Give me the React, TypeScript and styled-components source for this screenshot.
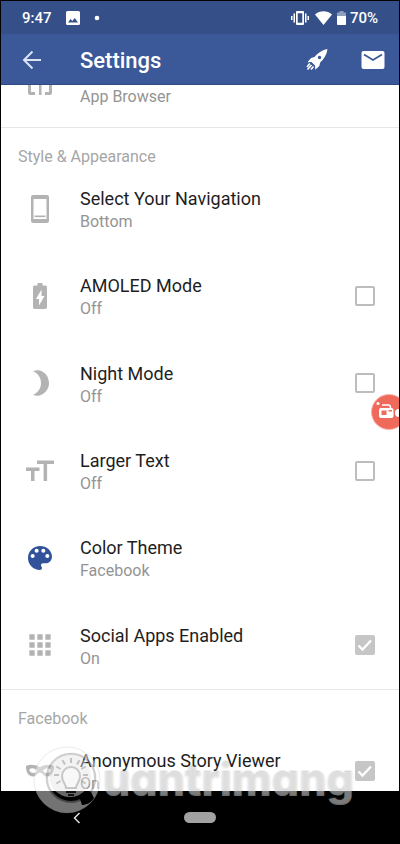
import React, { useState } from "react";
import styled, { createGlobalStyle } from "styled-components";

const GlobalStyle = createGlobalStyle`
  *, *::before, *::after { box-sizing: border-box; }
  body { margin: 0; background: #000; font-family: Roboto, "Noto Sans", sans-serif; }
  button { font: inherit; color: inherit; background: none; border: 0; padding: 0; cursor: pointer; }
  h1, h2, p { margin: 0; }
  svg { display: block; }
`;

const Phone = styled.div`
  position: relative;
  display: flex;
  flex-direction: column;
  min-height: 100vh;
  overflow: hidden;
  border: 1px solid #000;
  border-bottom: 0;
  background: #fff;
`;

const StatusBar = styled.div`
  display: flex;
  align-items: center;
  height: 33px;
  padding: 0 21px;
  background: #355088;
  color: #fff;
  font-size: 15px;
  font-weight: 500;
  line-height: 20px;
`;

const StatusGroup = styled.div<{ $end?: boolean }>`
  display: flex;
  align-items: center;
  gap: ${(p) => (p.$end ? "4px" : "14px")};
  margin-left: ${(p) => (p.$end ? "auto" : "0")};
`;

const Toolbar = styled.header`
  display: flex;
  align-items: center;
  height: 51px;
  padding: 2px 12px 0 17px;
  background: #3b5998;
  border-bottom: 1px solid #2f4a85;
  color: #fff;
`;

const ToolButton = styled.button`
  display: grid;
  place-items: center;
  width: 28px;
  height: 28px;
`;

const Title = styled.h1`
  flex: 1;
  margin: 2px 0 0 34px;
  font-size: 22px;
  font-weight: 500;
  line-height: 28px;
`;

const Actions = styled.div`
  display: flex;
  gap: 28px;
`;

const Content = styled.main`
  display: flex;
  flex: 1;
  flex-direction: column;
`;

const Section = styled.section<{ $grow?: boolean }>`
  display: flex;
  flex-direction: column;
  flex: ${(p) => (p.$grow ? "1 0 auto" : "0 0 auto")};
  border-top: 1px solid #e6e6e6;
`;

const SectionTitle = styled.h2`
  padding: 19px 17px 0;
  height: 37px;
  font-size: 16px;
  font-weight: 400;
  line-height: 20px;
  color: #a6a6a6;
`;

const Row = styled.div`
  display: flex;
  flex: 1 0 auto;
  align-items: center;
  min-height: 87px;
  padding: 0 24px 0 23px;
`;

const Peek = styled.div<{ $from: "top" | "bottom" }>`
  display: flex;
  flex-direction: column;
  justify-content: ${(p) => (p.$from === "top" ? "flex-start" : "flex-end")};
  height: ${(p) => (p.$from === "top" ? "64px" : "42px")};
  overflow: hidden;
`;

const RowIcon = styled.span<{ $color?: string }>`
  width: 32px;
  height: 32px;
  margin-right: 24px;
  color: ${(p) => p.$color ?? "#b3b3b3"};
`;

const RowText = styled.label<{ $secondLine?: boolean }>`
  flex: 1;
  padding-top: ${(p) => (p.$secondLine ? "26px" : "2px")};
`;

const RowTitle = styled.span`
  display: block;
  font-size: 18px;
  line-height: 24px;
  color: #1e1e1e;
`;

const RowValue = styled.span`
  display: block;
  font-size: 16px;
  line-height: 21px;
  color: #949494;
`;

const Check = styled.input`
  appearance: none;
  width: 20px;
  height: 20px;
  margin: 0;
  border: 2px solid #bdbdbd;
  border-radius: 2px;
  background: #fff;
  &:checked {
    background: #c6c6c6 url("data:image/svg+xml,%3Csvg xmlns='http://www.w3.org/2000/svg' viewBox='0 0 16 16'%3E%3Cpath d='M1.5 8.5l4 4L14 3.5' fill='none' stroke='white' stroke-width='2.4'/%3E%3C/svg%3E") center / 16px 16px no-repeat;
    border-color: #c6c6c6;
  }
`;

const NavBar = styled.nav`
  display: grid;
  grid-template-columns: 1fr auto 1fr;
  align-items: center;
  height: 53px;
  background: #000;
`;

const NavBack = styled.button`
  justify-self: center;
  width: 24px;
  height: 24px;
  margin-right: 32px;
  display: grid;
  place-items: center;
`;

const HomePill = styled.button`
  && {
    width: 32px;
    height: 11px;
    border-radius: 6px;
    background: #a2a2a2;
  }
`;

const Recorder = styled.button`
  position: absolute;
  top: 393px;
  right: -8px;
  width: 36px;
  height: 36px;
`;

const Watermark = styled.div`
  position: absolute;
  left: 32px;
  bottom: 28px;
  display: flex;
  align-items: center;
  pointer-events: none;
`;

const WatermarkText = styled.span`
  margin-left: -2px;
  font-family: Inter, sans-serif;
  font-size: 43px;
  font-weight: 800;
  line-height: 64px;
  font-feature-settings: "cv11";
  color: rgba(255, 255, 255, 0.42);
  text-shadow: 0 -1px 2px rgba(100, 100, 100, 0.35);
`;

const Art = ({ children, size = 32 }: { children: React.ReactNode; size?: number }) => (
  <svg width={size} height={size} viewBox={`0 0 ${size} ${size}`} fill="currentColor" aria-hidden="true">
    {children}
  </svg>
);

const icons = {
  phone: (
    <Art>
      <path fillRule="evenodd" d="M9 2h14a2 2 0 0 1 2 2v24a2 2 0 0 1-2 2H9a2 2 0 0 1-2-2V4a2 2 0 0 1 2-2zM9.500 6v20h13V6z" />
      <path d="M10.500 22.500h11v1.700h-11z" />
    </Art>
  ),
  battery: (
    <Art>
      <path fillRule="evenodd" d="M13.500 3h5v2.500h2.700c1 0 1.800.8 1.800 1.800v20c0 1-.8 1.700-1.800 1.700H10.800C9.800 29 9 28.300 9 27.300v-20c0-1 .8-1.800 1.800-1.800h2.700zM17.500 9.500L12 19h3v6.500L20.500 16h-3z" />
    </Art>
  ),
  moon: (
    <Art>
      <path d="M9 4.200C11 3.400 13 3 14.500 3.200 20.500 4 25 9.500 25 16s-4.800 12-10.800 12.700c-1.600.2-3.600-.2-5.200-1 4.600-1.600 8-6.200 8-11.700S13.600 5.800 9 4.200z" />
    </Art>
  ),
  text: (
    <Art>
      <path d="M13 5.500h17v3.500h-6.900V26h-3.500V9H13z" />
      <path d="M2 12.500h13.500V16h-5v10H7V16H2z" />
    </Art>
  ),
  palette: (
    <svg width="32" height="32" viewBox="0 0 24 24" fill="currentColor" aria-hidden="true">
      <path d="M12 3c-4.970 0-9 4.030-9 9s4.030 9 9 9c.83 0 1.500-.67 1.500-1.500 0-.39-.15-.74-.39-1.010-.23-.26-.38-.61-.38-.99 0-.83.67-1.500 1.500-1.500H16c2.760 0 5-2.240 5-5 0-4.420-4.030-8-9-8zm-5.500 9c-.83 0-1.500-.67-1.500-1.500S5.670 9 6.500 9 8 9.670 8 10.500 7.330 12 6.500 12zm3-4C8.670 8 8 7.330 8 6.500S8.670 5 9.500 5s1.500.67 1.500 1.500S10.330 8 9.500 8zm5 0c-.83 0-1.500-.67-1.500-1.500S13.670 5 14.500 5s1.500.67 1.500 1.500S15.330 8 14.500 8zm3 4c-.83 0-1.500-.67-1.500-1.500S16.670 9 17.500 9s1.500.67 1.500 1.500-.67 1.500-1.500 1.500z" />
    </svg>
  ),
  apps: (
    <svg width="32" height="32" viewBox="0 0 24 24" fill="currentColor" aria-hidden="true">
      <path d="M4 8h4V4H4v4zm6 12h4v-4h-4v4zm-6 0h4v-4H4v4zm0-6h4v-4H4v4zm6 0h4v-4h-4v4zm6-10v4h4V4h-4zm-6 4h4V4h-4v4zm6 6h4v-4h-4v4zm0 6h4v-4h-4v4z" />
    </svg>
  ),
  mask: (
    <Art>
      <path fillRule="evenodd" d="M2 11c4-2 9-1.500 14 1.200C21 9.500 26 9 30 11c.3 5-2 10.500-7 10.500-3.500 0-4.500-4-7-4s-3.500 4-7 4C4 21.500 1.700 16 2 11zm3.200 3.800c1 4 6 4.400 7.800 1-2-2.800-5.300-3.300-7.800-1zm13.800 1c1.800 3.400 6.800 3 7.800-1-2.500-2.300-5.800-1.800-7.800 1z" />
    </Art>
  ),
  browser: (
    <Art>
      <path d="M4 2h3v22h4v3H6a2 2 0 0 1-2-2zM15 2h2.500v25H15zM21 24h4V2h3v23a2 2 0 0 1-2 2h-5z" />
    </Art>
  ),
};

type Item = { id: string; icon: keyof typeof icons; title: string; value: string; color?: string; check?: boolean };

const items: Item[] = [
  { id: "navigation", icon: "phone", title: "Select Your Navigation", value: "Bottom" },
  { id: "amoled", icon: "battery", title: "AMOLED Mode", value: "Off", check: false },
  { id: "night", icon: "moon", title: "Night Mode", value: "Off", check: false },
  { id: "larger", icon: "text", title: "Larger Text", value: "Off", check: false },
  { id: "theme", icon: "palette", title: "Color Theme", value: "Facebook", color: "#32539a" },
  { id: "social", icon: "apps", title: "Social Apps Enabled", value: "On", check: true },
];

function Setting({ item }: { item: Item }) {
  const [on, setOn] = useState(!!item.check);
  const toggles = item.check !== undefined;
  return (
    <Row>
      <RowIcon $color={item.color}>{icons[item.icon]}</RowIcon>
      <RowText as={toggles ? "label" : "div"} htmlFor={toggles ? item.id : undefined}>
        <RowTitle>{item.title}</RowTitle>
        <RowValue>{toggles ? (on ? "On" : "Off") : item.value}</RowValue>
      </RowText>
      {toggles && <Check id={item.id} type="checkbox" checked={on} onChange={() => setOn(!on)} />}
    </Row>
  );
}

const rays = [-120, -90, -60, -30, 0, 30, 60, 90, 120];

export default function App() {
  return (
    <>
      <GlobalStyle />
      <Phone>
        <StatusBar>
          <StatusGroup>
            <span>9:47</span>
            <svg width="14" height="14" viewBox="0 0 14 14" aria-hidden="true">
              <path fill="#fff" fillRule="evenodd" d="M1.500 0h11A1.500 1.500 0 0 1 14 1.500v11a1.500 1.500 0 0 1-1.500 1.500h-11A1.500 1.500 0 0 1 0 12.500v-11A1.500 1.500 0 0 1 1.500 0zM2 11.500h10L8.800 7 6.300 10 4.500 8z" />
            </svg>
            <svg width="6" height="6" viewBox="0 0 6 6" aria-hidden="true">
              <circle cx="3" cy="3" r="2.300" fill="#fff" />
            </svg>
          </StatusGroup>
          <StatusGroup $end>
            <svg width="18" height="14" viewBox="0 0 18 14" fill="#fff" aria-hidden="true">
              <path fillRule="evenodd" d="M6 0h6a1 1 0 0 1 1 1v12a1 1 0 0 1-1 1H6a1 1 0 0 1-1-1V1a1 1 0 0 1 1-1zm.700 2.300v9.400h4.600V2.300zM2.500 2.500H4v9H2.500zM0 5h1.500v4H0zM14 2.500h1.500v9H14zM16.500 5H18v4h-1.500z" />
            </svg>
            <svg width="20" height="16" viewBox="0 0 20 16" fill="#fff" aria-hidden="true">
              <path d="M2 4.500c5-4.200 12-4.200 17 0L10.500 15z" />
            </svg>
            <svg width="9" height="16" viewBox="0 0 9 16" fill="#fff" aria-hidden="true">
              <path opacity=".45" d="M2.500 1h4v1.500H9V6H0V2.500h2.500z" />
              <path d="M0 6h9v8.200a.8.800 0 0 1-.8.800H.8a.8.800 0 0 1-.8-.8z" />
            </svg>
            <span>70%</span>
          </StatusGroup>
        </StatusBar>

        <Toolbar>
          <ToolButton aria-label="Back">
            <svg width="24" height="24" viewBox="0 0 24 24" fill="none" stroke="#dbe3f5" strokeWidth="2" aria-hidden="true">
              <path d="M21 12H4M12.500 3.500L4 12l8.500 8.500" />
            </svg>
          </ToolButton>
          <Title>Settings</Title>
          <Actions>
            <ToolButton aria-label="Boost">
              <svg width="24" height="24" viewBox="0 0 24 24" fill="#fff" aria-hidden="true">
                <path fillRule="evenodd" d="M22.500 1C17 2 12.500 5 9.500 9L6 10l-3.500 4.200 4-.2 3.500 3.500.3 4.200 4-3.700.9-3.600C19 11 21.800 6.500 22.500 1zM14.500 7.800a1.700 1.700 0 1 1 0 3.400 1.700 1.700 0 0 1 0-3.400z" />
                <path d="M4.800 15.500L2 19M6.500 17L2.500 21.500M8.500 18.500L6 21.500" fill="none" stroke="#fff" strokeWidth="1.600" />
              </svg>
            </ToolButton>
            <ToolButton aria-label="Messages">
              <svg width="24" height="20" viewBox="0 0 24 20" aria-hidden="true">
                <rect x=".5" y="1" width="23" height="18" rx="2" fill="#fff" />
                <path d="M3 4.500l9 5.500 9-5.500" fill="none" stroke="#3b5998" strokeWidth="1.800" />
              </svg>
            </ToolButton>
          </Actions>
        </Toolbar>

        <Content>
          <Peek $from="bottom">
            <Row>
              <RowIcon>{icons.browser}</RowIcon>
              <RowText as="div" $secondLine>
                <RowValue>App Browser</RowValue>
              </RowText>
            </Row>
          </Peek>
          <Section $grow>
            <SectionTitle>Style &amp; Appearance</SectionTitle>
            {items.map((item) => (
              <Setting key={item.id} item={item} />
            ))}
          </Section>
          <Section>
            <SectionTitle>Facebook</SectionTitle>
            <Peek $from="top">
              <Setting item={{ id: "anonymous", icon: "mask", title: "Anonymous Story Viewer", value: "On", check: true }} />
            </Peek>
          </Section>
        </Content>

        <NavBar>
          <NavBack aria-label="Back">
            <svg width="8" height="12" viewBox="0 0 8 12" fill="none" stroke="#e0e0e0" strokeWidth="1.500" aria-hidden="true">
              <path d="M6.500 1L1.500 6l5 5" />
            </svg>
          </NavBack>
          <HomePill aria-label="Home" />
        </NavBar>

        <Recorder aria-label="Screen recorder">
          <svg width="36" height="36" viewBox="0 0 36 36" aria-hidden="true">
            <circle cx="18" cy="18" r="17.500" fill="#f06a5c" stroke="#f7b5ac" />
            <circle cx="7" cy="9.500" r="1.500" fill="#fff" />
            <path d="M11 11h6.500q2 0 2 3" fill="none" stroke="#fff" strokeWidth="1.500" />
            <path fill="#fff" fillRule="evenodd" d="M10 14h10.500a2 2 0 0 1 2 2v6a2 2 0 0 1-2 2H10a2 2 0 0 1-2-2v-6a2 2 0 0 1 2-2zm.5 2.500V21h5v-4.500zM17.500 16v1.500h3.500V16z" />
            <circle cx="28" cy="19" r="4" fill="#fff" />
          </svg>
        </Recorder>

        <Watermark aria-hidden="true">
          <svg width="72" height="72" viewBox="0 0 72 72" fill="none">
            <path fillRule="evenodd" fill="#fff" fillOpacity=".45" stroke="#888" strokeOpacity=".18" d="M34 3a33 33 0 1 1 0 66 33 33 0 0 1 0-66zM38 9a25 25 0 1 0 0 50 25 25 0 0 0 0-50z" />
            <circle cx="38" cy="34" r="24" stroke="#999" strokeOpacity=".45" strokeWidth="2" />
            <circle cx="37" cy="32" r="21" fill="#e4e4e4" fillOpacity=".45" />
            <g stroke="#a0a0a0" strokeOpacity=".6" strokeWidth="2">
              {rays.map((angle) => (
                <path key={angle} d="M38 14v5" transform={`rotate(${angle} 38 31)`} />
              ))}
            </g>
            <path d="M33 44c0-4-4-6-4-12a9 9 0 0 1 18 0c0 6-4 8-4 12z" fill="#fff" fillOpacity=".45" stroke="#999" strokeOpacity=".5" strokeWidth="2" />
            <path d="M33 48h10M35 51h6" stroke="#111" strokeWidth="2" />
            <path d="M46 52c4-1 7-5 12-4l3 6c-3 5-8 7-12 7z" fill="#000" />
          </svg>
          <WatermarkText>uantrimang</WatermarkText>
        </Watermark>
      </Phone>
    </>
  );
}
